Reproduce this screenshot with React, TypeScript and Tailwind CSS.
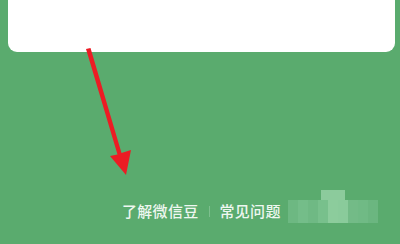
const cells = [
  "#6db882", "#74bd89", "#6fb984", "#78c08c", "#8ccc9c", "#8acb9b", "#73bb87", "#70ba85", "#6bb680",
];

export default function App() {
  return (
    <div className="relative w-[400px] h-[244px] overflow-hidden bg-[#5aab6e] font-['Noto_Sans_CJK_SC',sans-serif]">
      <div className="ml-[8px] mr-[5px] h-[52px] rounded-b-[9px] bg-white" />

      <div className="flex items-start mt-[150px] pl-[122px]">
        <span className="text-[15px] leading-[18px] font-medium text-[#eef7f0] tracking-[0.3px]">了解微信豆</span>
        <span className="mt-[4px] mx-[10px] w-px h-[11px] bg-[#7dbf8e]" />
        <span className="text-[15px] leading-[18px] font-medium text-[#eef7f0] tracking-[0.3px]">常见问题</span>
        <div className="ml-[7px] -mt-[12px] flex flex-col">
          <div className="ml-[33px] w-[24px] h-[10px] bg-[#8ccb9c]" />
          <div className="flex w-[90px] h-[23px]">
            {cells.map((c, i) => (
              <div key={i} className="flex-1" style={{ backgroundColor: c }} />
            ))}
          </div>
        </div>
      </div>

      <svg className="absolute left-0 top-0" width="400" height="244" viewBox="0 0 400 244">
        <path d="M86 49 L90.5 48 L121.5 153 L131 150 L126 175 L110 156 L117.5 154.5 Z" fill="#ec1c24" />
      </svg>
    </div>
  );
}
